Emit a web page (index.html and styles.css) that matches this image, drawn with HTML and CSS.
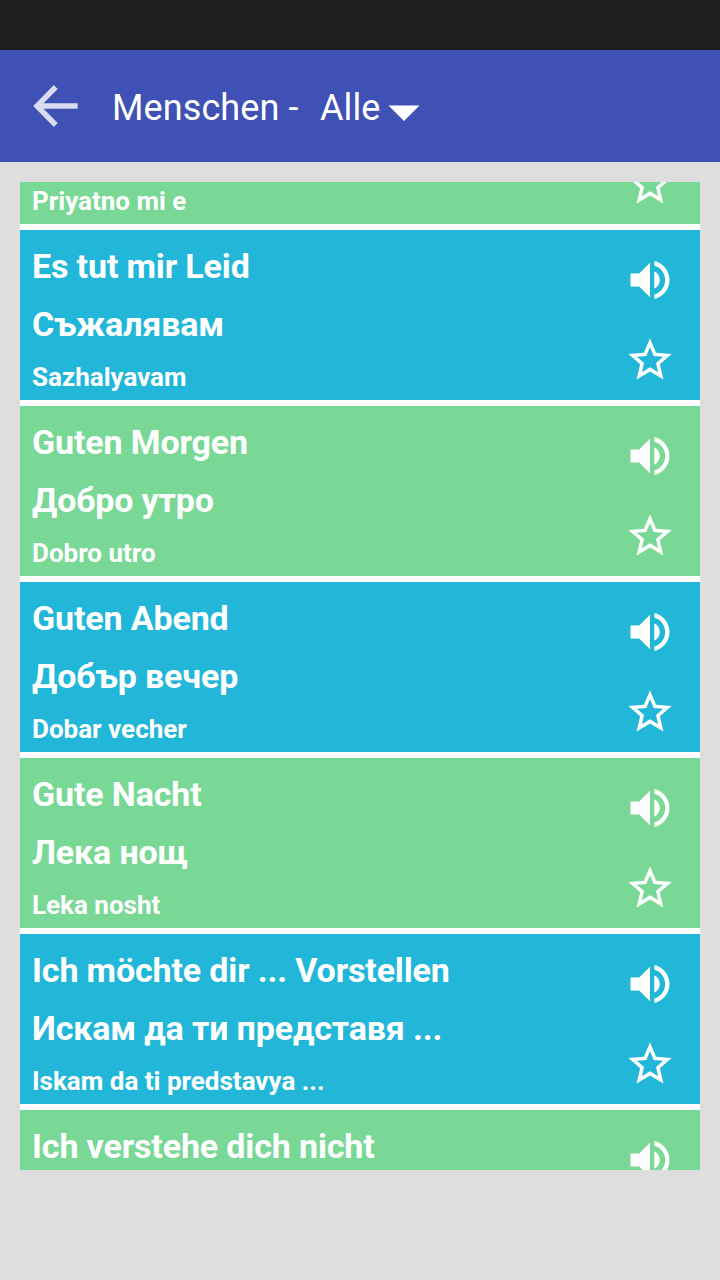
FILE: index.html
```html
<!DOCTYPE html>
<html lang="de">
<head>
    <meta charset="UTF-8">
    <meta name="viewport" content="width=device-width, initial-scale=1.0">
    <title>Menschen</title>
    <link rel="stylesheet" href="styles.css">
</head>
<body>
    <!-- Icon shapes used by every card -->
    <svg class="icon-defs" aria-hidden="true">
        <symbol id="speaker" viewBox="0 0 24 24">
            <path d="M3 9v6h4l5 5V4L7 9H3zm13.5 3c0-1.77-1.02-3.29-2.5-4.03v8.05c1.48-.73 2.5-2.25 2.5-4.02zM14 3.23v2.06c2.89.86 5 3.54 5 6.71s-2.11 5.85-5 6.71v2.06c4.01-.91 7-4.49 7-8.77s-2.99-7.86-7-8.77z"/>
        </symbol>
        <symbol id="star" viewBox="0 0 24 24">
            <path d="M22 9.24l-7.19-.62L12 2 9.19 8.63 2 9.24l5.46 4.73L5.82 21 12 17.27 18.18 21l-1.63-7.03L22 9.24zM12 15.4l-3.76 2.27 1-4.28-3.32-2.88 4.38-.38L12 6.1l1.71 4.04 4.38.38-3.32 2.88 1 4.28L12 15.4z"/>
        </symbol>
    </svg>

    <div class="status-bar"></div>

    <div class="toolbar">
        <svg class="back" viewBox="0 0 48 48">
            <path d="M24.8 5L6 24l18.8 19M7 24h39.7"/>
        </svg>
        <span class="title">Menschen -</span>
        <span class="filter">Alle</span>
        <svg class="caret" viewBox="0 0 32 16"><path d="M0.5 0.5h31L16 16z"/></svg>
    </div>

    <div class="list">
        <div class="cards">
            <div class="card green">
                <div class="words bottom">
                    <p class="latin">Priyatno mi e</p>
                </div>
                <div class="actions">
                    <svg class="speaker"><use href="#speaker"/></svg>
                    <svg class="star"><use href="#star"/></svg>
                </div>
            </div>

            <div class="card blue">
                <div class="words">
                    <p class="german">Es tut mir Leid</p>
                    <p class="bulgarian">Съжалявам</p>
                    <p class="latin">Sazhalyavam</p>
                </div>
                <div class="actions">
                    <svg class="speaker"><use href="#speaker"/></svg>
                    <svg class="star"><use href="#star"/></svg>
                </div>
            </div>

            <div class="card green">
                <div class="words">
                    <p class="german">Guten Morgen</p>
                    <p class="bulgarian">Добро утро</p>
                    <p class="latin">Dobro utro</p>
                </div>
                <div class="actions">
                    <svg class="speaker"><use href="#speaker"/></svg>
                    <svg class="star"><use href="#star"/></svg>
                </div>
            </div>

            <div class="card blue">
                <div class="words">
                    <p class="german">Guten Abend</p>
                    <p class="bulgarian">Добър вечер</p>
                    <p class="latin">Dobar vecher</p>
                </div>
                <div class="actions">
                    <svg class="speaker"><use href="#speaker"/></svg>
                    <svg class="star"><use href="#star"/></svg>
                </div>
            </div>

            <div class="card green">
                <div class="words">
                    <p class="german">Gute Nacht</p>
                    <p class="bulgarian">Лека нощ</p>
                    <p class="latin">Leka nosht</p>
                </div>
                <div class="actions">
                    <svg class="speaker"><use href="#speaker"/></svg>
                    <svg class="star"><use href="#star"/></svg>
                </div>
            </div>

            <div class="card blue">
                <div class="words">
                    <p class="german">Ich möchte dir ... Vorstellen</p>
                    <p class="bulgarian">Искам да ти представя ...</p>
                    <p class="latin">Iskam da ti predstavya ...</p>
                </div>
                <div class="actions">
                    <svg class="speaker"><use href="#speaker"/></svg>
                    <svg class="star"><use href="#star"/></svg>
                </div>
            </div>

            <div class="card green">
                <div class="words">
                    <p class="german">Ich verstehe dich nicht</p>
                </div>
                <div class="actions">
                    <svg class="speaker"><use href="#speaker"/></svg>
                    <svg class="star"><use href="#star"/></svg>
                </div>
            </div>
        </div>
    </div>
</body>
</html>
```

FILE: styles.css
```css
/* Page */
body {
    margin: 0;
    height: 1280px;
    overflow: hidden;
    font-family: Roboto, "Noto Sans", sans-serif;
    background-color: #dedede;
    color: white;
}

.icon-defs {
    display: none;
}

/* Top bars */
.status-bar {
    height: 50px;
    background-color: #1f1f1f;
}

.toolbar {
    display: flex;
    align-items: center;
    height: 112px;
    padding-left: 31px;
    background-color: #3f51b5;
    font-size: 36px;
    line-height: 42px;
    letter-spacing: 0.1px;
}

.back {
    width: 48px;
    height: 48px;
    margin-right: 33px;
    fill: none;
    stroke: #d9dcf0;
    stroke-width: 5.4;
}

.title {
    width: 208px;
    white-space: nowrap;
    padding-top: 4px;
}

.filter {
    padding-top: 4px;
}

.caret {
    width: 32px;
    height: 16px;
    margin: 14px 0 0 8px;
    fill: white;
}

/* Scrolling list of phrases */
.list {
    height: 988px;
    margin: 20px 20px 0;
    overflow: hidden;
    background-color: white;
}

.cards {
    display: flex;
    flex-direction: column;
    gap: 6px;
    margin-top: -128px;
}

.card {
    display: flex;
    justify-content: space-between;
    height: 170px;
}

.green {
    background-color: #7ad896;
}

.blue {
    background-color: #22b7d9;
}

.words {
    padding: 6px 12px 0;
    font-weight: bold;
}

.bottom {
    align-self: flex-end;
}

.words p {
    margin: 0;
    white-space: nowrap;
}

.german,
.bulgarian {
    font-size: 34px;
    line-height: 58px;
    letter-spacing: -0.14px;
}

.german {
    padding-top: 1px;
}

.latin {
    padding-top: 1px;
    font-size: 26px;
    line-height: 46px;
}

/* Play and favourite icons */
.actions {
    display: grid;
    grid-template-rows: 80px 80px;
    place-items: center;
    width: 100px;
    padding-top: 10px;
    fill: white;
}

.speaker {
    width: 52px;
    height: 52px;
}

.star {
    width: 52px;
    height: 52px;
}
```
